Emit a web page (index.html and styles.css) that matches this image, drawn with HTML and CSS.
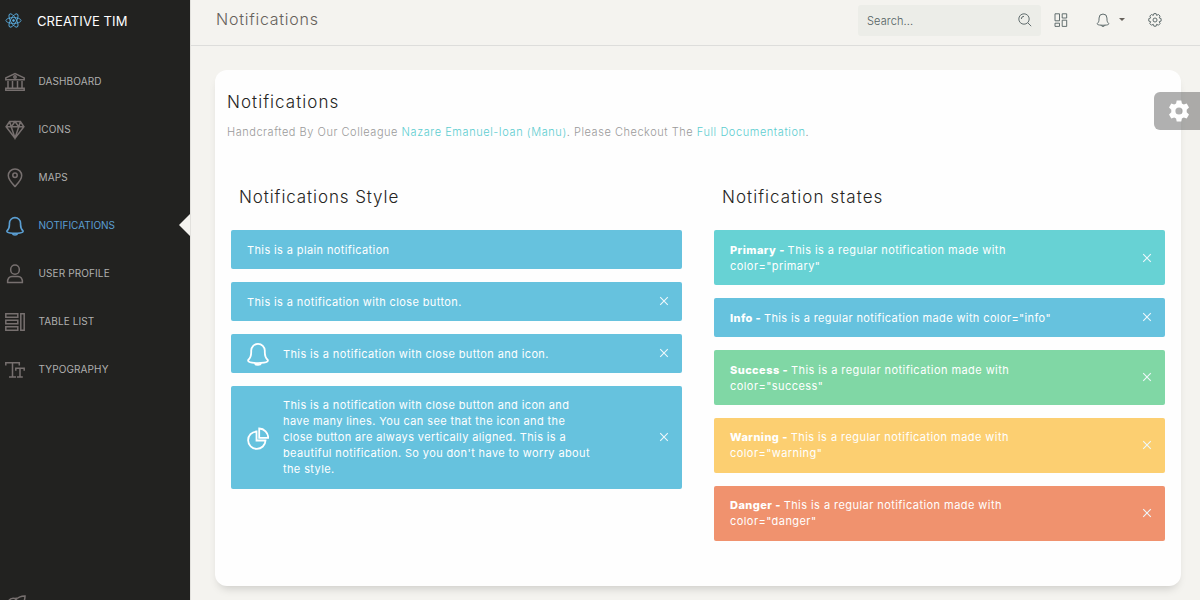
FILE: index.html
```html
<!DOCTYPE html>
<html lang="en">
<head>
<meta charset="utf-8">
<title>Notifications</title>
<link rel="stylesheet" href="styles.css">
</head>
<body>
<svg class="defs" width="0" height="0">
  <defs>
    <symbol id="bell" viewBox="0 0 22 24"><path d="M4.200 10.200V8.600a6.800 6.800 0 0 1 13.600 0v1.600c0 4.200 1 6 3 7.800.4 1.200-.6 2.200-3.800 2.600-3.800.6-8.200.6-12 0C1.800 20.200.8 19.200 1.200 18c2-1.800 3-3.600 3-7.800z"/><path d="M7.800 21.200a3.300 2.300 0 0 0 6.400 0"/></symbol>
    <symbol id="close" viewBox="0 0 10 10"><path d="M1.200 1.200l7.600 7.600M8.800 1.200L1.200 8.800"/></symbol>
  </defs>
</svg>
<div class="app">
  <aside class="sidebar">
    <div class="brand">
      <svg class="logo" viewBox="0 0 18 18"><ellipse cx="9" cy="9" rx="8" ry="3.100"/><ellipse cx="9" cy="9" rx="8" ry="3.100" transform="rotate(60 9 9)"/><ellipse cx="9" cy="9" rx="8" ry="3.100" transform="rotate(120 9 9)"/><circle class="core" cx="9" cy="9" r="1"/></svg>
      <span class="brand-name">CREATIVE TIM</span>
    </div>
    <nav class="nav">
      <a class="item"><svg class="nav-icon" viewBox="0 0 20 20"><path d="M.8 5.900L10 1.500l9.200 4.400v1.900H.8zM.8 18.200v-1.900h18.400v1.900zM3 9v6.500M7.500 9v6.500M12.500 9v6.500M17 9v6.500"/><circle cx="10" cy="5" r="1.200"/></svg><span class="label">DASHBOARD</span></a>
      <a class="item"><svg class="nav-icon" viewBox="0 0 20 20"><path d="M4.600 1.600h10.800l3.500 5.200L10 18.300 1.100 6.800zM1.100 6.800h17.800M6.200 6.800L10 18l3.800-11.200M4.600 1.600l1.600 5.200L10 1.600l3.800 5.200 1.600-5.200"/></svg><span class="label">ICONS</span></a>
      <a class="item"><svg class="nav-icon" viewBox="0 0 20 20"><path d="M16.700 7.600c0 4.400-4.600 8.700-6.700 10.900C7.900 16.300 3.300 12 3.300 7.600a6.700 6.700 0 0 1 13.400 0z"/><circle cx="10" cy="7.300" r="2.200"/></svg><span class="label">MAPS</span></a>
      <a class="item active"><svg class="nav-icon" viewBox="0 0 20 20"><use href="#bell" x="1" y="0" width="18" height="20"/></svg><span class="label">NOTIFICATIONS</span></a>
      <a class="item"><svg class="nav-icon" viewBox="0 0 20 20"><rect x="5.700" y="1" width="8.600" height="9.300" rx="4.300"/><path d="M2.600 18.500c-.3-4 1.700-6 4.400-6h6c2.700 0 4.700 2 4.400 6z"/></svg><span class="label">USER PROFILE</span></a>
      <a class="item"><svg class="nav-icon" viewBox="0 0 20 20"><path d="M.8 1.800h12v3.400H.8zM.8 8.300h12v3.400H.8zM.8 14.800h12v3.400H.8zM15.800 1.800h3.400v16.400h-3.400z"/></svg><span class="label">TABLE LIST</span></a>
      <a class="item"><svg class="nav-icon" viewBox="0 0 20 20"><path d="M.8 5.500V2.800h13.500v2.700M7.500 2.800v14M4 17h7M10.800 10.700V8.300h8.400v2.400M15 8.300v8.500M12 17h5.800"/></svg><span class="label">TYPOGRAPHY</span></a>
    </nav>
    <svg class="nav-icon rocket" viewBox="0 0 20 20"><path d="M19 1c-5 0-8.500 2-11 6L1.500 8 5 11l4 4 3 3.500L13 12c4-2.500 6-6 6-11zM1.500 8C3 4 5 2.500 9 3.500L12 3"/></svg>
  </aside>
  <main class="main">
    <header class="topbar">
      <h1 class="page-title">Notifications</h1>
      <div class="tools">
        <div class="search"><span class="search-text">Search...</span><svg class="tool-icon" viewBox="0 0 14 14"><circle cx="6" cy="6" r="5.200"/><path d="M9.900 9.900l3.300 3.300M3.300 6A2.700 2.700 0 0 1 6 3.300"/></svg></div>
        <svg class="tool-icon grid-icon" viewBox="0 0 14 14"><path d="M1 .8h4.500v7H1zM8.200.8h4.500v4.200H8.200zM1 10.200h4.500v3.200H1zM8.200 7.200h4.500v6.200H8.200z"/></svg>
        <svg class="tool-icon bell-icon"><use href="#bell"/></svg>
        <span class="caret"></span>
        <svg class="tool-icon gear-icon" viewBox="0 0 14 14"><circle cx="7" cy="7" r="2"/><path d="M5.900.6h2.200l.5 1.800 1.900-.9 1.600 1.600-.9 1.800 1.900.7v2.500l-1.900.6.9 1.900-1.600 1.600-1.900-.9-.5 1.900H5.900l-.6-1.900-1.900.9-1.600-1.600.9-1.900-1.900-.6V5.600l1.900-.7-.9-1.800 1.600-1.600 1.900.9z"/></svg>
      </div>
    </header>
    <section class="card">
      <h2 class="title">Notifications</h2>
      <p class="subtitle">Handcrafted By Our Colleague <a>Nazare Emanuel-Ioan (Manu)</a>. Please Checkout The <a>Full Documentation</a>.</p>
      <div class="columns">
        <div class="column">
          <h3 class="title style-title">Notifications Style</h3>
          <div class="alert info"><p>This is a plain notification</p></div>
          <div class="alert info"><p>This is a notification with close button.</p><svg class="close"><use href="#close"/></svg></div>
          <div class="alert info"><svg class="alert-icon"><use href="#bell"/></svg><p>This is a notification with close button and icon.</p><svg class="close"><use href="#close"/></svg></div>
          <div class="alert info tall"><svg class="alert-icon" viewBox="0 0 22 24"><path d="M9.500 4.500a8.700 8.700 0 1 0 9 9h-9z"/><path d="M12.200 1.500a9.300 9.300 0 0 1 9 9.300h-9z"/></svg><p>This is a notification with close button and icon and<br>have many lines. You can see that the icon and the<br>close button are always vertically aligned. This is a<br>beautiful notification. So you don't have to worry about<br>the style.</p><svg class="close"><use href="#close"/></svg></div>
        </div>
        <div class="column">
          <h3 class="title">Notification states</h3>
          <div class="alert wide primary"><p><b>Primary - </b>This is a regular notification made with<br>color="primary"</p><svg class="close"><use href="#close"/></svg></div>
          <div class="alert info"><p><b>Info - </b>This is a regular notification made with color="info"</p><svg class="close"><use href="#close"/></svg></div>
          <div class="alert wide success"><p><b>Success - </b>This is a regular notification made with<br>color="success"</p><svg class="close"><use href="#close"/></svg></div>
          <div class="alert wide raised warning"><p><b>Warning - </b>This is a regular notification made with<br>color="warning"</p><svg class="close"><use href="#close"/></svg></div>
          <div class="alert wide raised danger"><p><b>Danger - </b>This is a regular notification made with<br>color="danger"</p><svg class="close"><use href="#close"/></svg></div>
        </div>
      </div>
    </section>
    <div class="settings"><svg viewBox="0 0 22 22"><path fill-rule="evenodd" d="M8.700.5h4.600l.6 3 1.900 1.100 2.900-1 2.300 4-2.300 2.100v2.600l2.300 2.100-2.300 4-2.900-1-1.900 1.100-.6 3H8.700l-.6-3-1.900-1.100-2.900 1-2.300-4 2.300-2.100V9.700L1 7.600l2.300-4 2.900 1 1.900-1.100zM11 7.400a3.600 3.600 0 1 0 0 7.200 3.600 3.600 0 0 0 0-7.200z"/></svg></div>
  </main>
</div>
</body>
</html>
```
FILE: styles.css
```css
* { box-sizing: border-box; }
body { margin: 0; background: #f4f3ef; font-family: Inter, "Open Sans", sans-serif; color: #252422; overflow: hidden; }
h1, h2, h3, p { margin: 0; font-weight: 300; white-space: nowrap; }
svg { flex: none; fill: none; stroke: currentColor; }
.defs { position: absolute; }
.app { display: flex; height: 600px; }

.sidebar { width: 190px; flex: none; display: flex; flex-direction: column; background: #222220; color: #b0b0af; overflow: hidden; }
.brand { height: 42px; flex: none; display: flex; align-items: center; padding-left: 5px; gap: 15px; color: #fff; }
.logo { width: 17px; height: 17px; margin-top: -2px; color: #5aaee0; stroke-width: .9; }
.core { fill: currentColor; }
.brand-name { font-size: 13px; letter-spacing: .08px; white-space: nowrap; }
.nav { display: flex; flex-direction: column; padding-top: 15px; }
.item { position: relative; height: 48px; display: flex; align-items: center; gap: 13.500px; padding-left: 5px; }
.nav-icon { width: 20px; height: 20px; stroke-width: 1.500; color: #77706f; }
.item .nav-icon { margin-top: 2px; }
.label { font-size: 10px; letter-spacing: .12px; white-space: nowrap; }
.active, .active .nav-icon { color: #5b9fd3; }
.active .nav-icon { stroke-width: 2; }
.active .label { letter-spacing: 0; }
.active::after { content: ""; position: absolute; right: 0; top: 13px; border: 11px solid transparent; border-left: 0; border-right-color: #f4f3ef; }
.rocket { margin: 202px 0 0 6px; }

.main { flex: 1; min-width: 0; position: relative; border-left: 1px solid #e2e1dd; }
.topbar { height: 46px; display: flex; justify-content: space-between; border-bottom: 1px solid #dddddb; }
.page-title { font-size: 16px; line-height: 20px; letter-spacing: .75px; padding: 9px 0 0 25px; color: #66615b; }
.tools { display: flex; height: 31px; margin-top: 5px; align-items: center; color: #536162; padding-right: 38px; }
.search { width: 183px; height: 31px; border-radius: 3px; background: #ecede8; display: flex; align-items: center; justify-content: space-between; padding: 0 9px; }
.search-text { font-size: 11px; font-weight: 300; letter-spacing: .1px; }
.tool-icon { width: 14px; height: 14px; margin-top: -1px; stroke-width: .9; }
.grid-icon { margin-left: 13px; }
.bell-icon { margin-left: 28px; stroke-width: 1.600; }
.caret { margin: -2px 23px 0 9px; border: 3.500px solid transparent; border-top-color: #66615b; border-bottom: 0; }

.card { margin: 24px 19px 0 24px; height: 516px; padding: 22px 0 0; border-radius: 12px; background: #fefefe; box-shadow: 0 6px 10px -4px rgba(0,0,0,.18); }
.title { font-size: 17px; line-height: 20px; letter-spacing: 1.040px; padding-left: 12px; }
.style-title { letter-spacing: .9px; }
.subtitle { font-size: 11px; line-height: 16px; letter-spacing: .53px; padding: 12px 0 0 12px; color: #9a9a9a; }
.subtitle a { color: #5ccdd0; letter-spacing: .57px; }
.columns { display: flex; gap: 32px; padding: 47px 16px 0; }
.column { flex: 1; display: flex; flex-direction: column; gap: 13px; }
.column .title { padding-left: 8px; margin-bottom: 10px; }
.alert { display: flex; align-items: center; min-height: 39px; padding: 12px 13px 11px 16px; border-radius: 2px; color: #fff; font-size: 11px; line-height: 16px; letter-spacing: .38px; }
.alert p { flex: 1; font-weight: 400; }
.alert b { font-weight: 800; }
.wide { letter-spacing: .44px; }
.tall, .raised { padding-top: 11px; padding-bottom: 12px; }
.alert-icon { width: 22px; height: 24px; margin: -4px 14px -4px 0; stroke-width: 1.800; }
.tall .alert-icon { margin-top: -1px; }
.close { width: 10px; height: 10px; margin-top: -2px; color: #eef8fb; stroke-width: 1.100; }
.tall .close, .raised .close, .primary .close { margin-top: 0; }
.info { background: #66c2de; }
.primary { background: #67d2d4; }
.success { background: #80d7a5; }
.warning { background: #fccf71; }
.danger { background: #f0926e; }
.settings { position: absolute; right: 0; top: 92px; width: 46px; height: 38px; padding: 8px 0 0 14px; border-radius: 6px 0 0 6px; background: rgba(104,103,103,.52); color: #fff; }
.settings svg { width: 22px; height: 22px; fill: currentColor; stroke: none; }
```
